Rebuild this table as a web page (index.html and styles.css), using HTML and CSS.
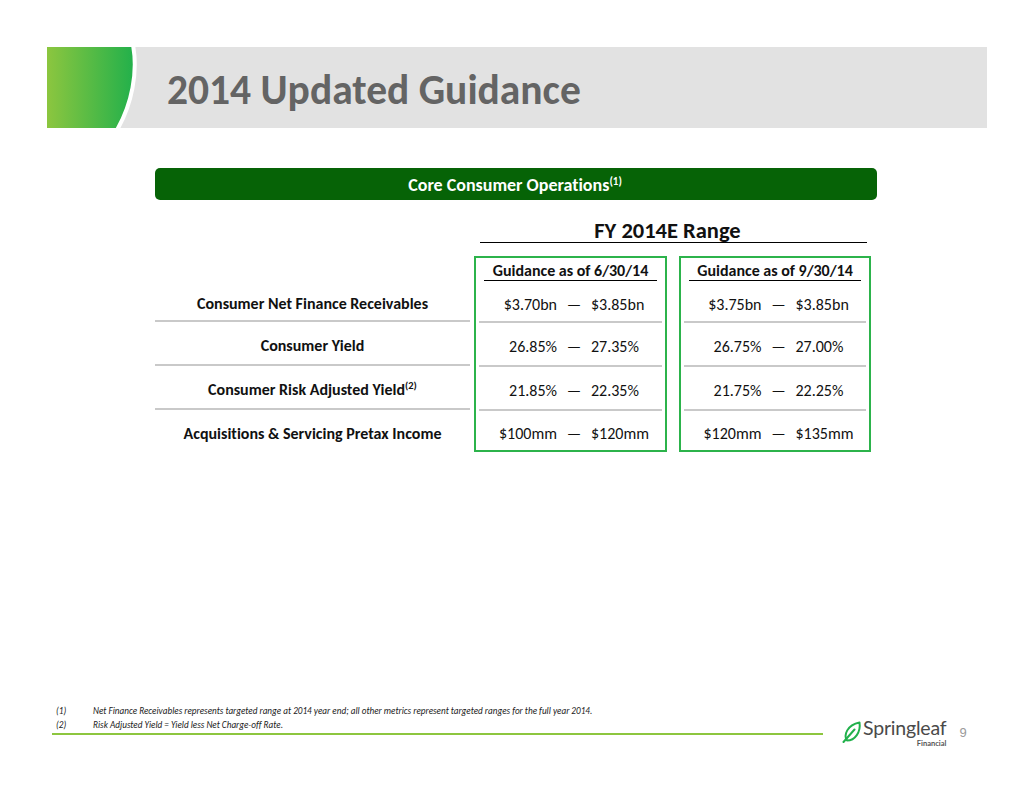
FILE: index.html
```html
<!DOCTYPE html>
<html lang="en">
<head>
<meta charset="utf-8">
<title>2014 Updated Guidance</title>
<link rel="stylesheet" href="styles.css">
</head>
<body>
<div class="page">
  <header class="titlebar">
    <svg class="title-mark" width="90" height="81" viewBox="0 0 90 81" aria-hidden="true">
      <defs>
        <linearGradient id="g1" x1="0" y1="0" x2="1" y2="0">
          <stop offset="0" stop-color="#8cc63f"/>
          <stop offset="1" stop-color="#21b04b"/>
        </linearGradient>
      </defs>
      <path d="M0 0 H86 C91 25 85 57 70 81 H0 Z" fill="url(#g1)"/>
      <path d="M86 -2 C91 25 85 57 70 83" fill="none" stroke="#ffffff" stroke-width="4"/>
    </svg>
    <h1 class="title">2014 Updated Guidance</h1>
  </header>

  <div class="section-bar"><span>Core Consumer Operations<sup>(1)</sup></span></div>

  <div class="guidance">
    <div class="range-head">FY 2014E Range</div>
    <div class="grid-body">
      <div class="labels">
        <div class="row r1"><span>Consumer Net Finance Receivables</span></div>
        <div class="row r2 sep"><span>Consumer Yield</span></div>
        <div class="row r3 sep"><span>Consumer Risk Adjusted Yield<sup>(2)</sup></span></div>
        <div class="row r4 sep"><span>Acquisitions &amp; Servicing Pretax Income</span></div>
      </div>
      <div class="box">
        <div class="box-head">Guidance as of 6/30/14</div>
        <div class="row r1 val"><span class="lo">$3.70bn</span><span class="dash">—</span><span class="hi">$3.85bn</span></div>
        <div class="row r2 val sep"><span class="lo">26.85%</span><span class="dash">—</span><span class="hi">27.35%</span></div>
        <div class="row r3 val sep"><span class="lo">21.85%</span><span class="dash">—</span><span class="hi">22.35%</span></div>
        <div class="row r4 val sep"><span class="lo">$100mm</span><span class="dash">—</span><span class="hi">$120mm</span></div>
      </div>
      <div class="box box2">
        <div class="box-head">Guidance as of 9/30/14</div>
        <div class="row r1 val"><span class="lo">$3.75bn</span><span class="dash">—</span><span class="hi">$3.85bn</span></div>
        <div class="row r2 val sep"><span class="lo">26.75%</span><span class="dash">—</span><span class="hi">27.00%</span></div>
        <div class="row r3 val sep"><span class="lo">21.75%</span><span class="dash">—</span><span class="hi">22.25%</span></div>
        <div class="row r4 val sep"><span class="lo">$120mm</span><span class="dash">—</span><span class="hi">$135mm</span></div>
      </div>
    </div>
  </div>

  <footer class="footer">
    <div class="foot-left">
      <div class="notes">
        <div class="note"><span class="note-num">(1)</span><span>Net Finance Receivables represents targeted range at 2014 year end; all other metrics represent targeted ranges for the full year 2014.</span></div>
        <div class="note"><span class="note-num">(2)</span><span>Risk Adjusted Yield = Yield less Net Charge-off Rate.</span></div>
      </div>
      <div class="rule"></div>
    </div>
    <div class="foot-right">
      <svg class="leaf" width="20" height="22" viewBox="0 0 20 22" aria-hidden="true">
        <path d="M5 19.5 C1.5 14 5 4 17.5 1.5 C19 11 13 19.5 5 19.5 Z" fill="none" stroke="#22b14c" stroke-width="2" stroke-linejoin="round"/>
        <path d="M1.5 21 L12.5 8.5" fill="none" stroke="#22b14c" stroke-width="2" stroke-linecap="round"/>
      </svg>
      <div class="wordmark">
        <span class="brand">Springleaf</span>
        <span class="brand-sub">Financial</span>
      </div>
      <span class="page-num">9</span>
    </div>
  </footer>
</div>
</body>
</html>
```

FILE: styles.css
```css
html, body {
  margin: 0;
  padding: 0;
}

body {
  width: 1034px;
  height: 799px;
  overflow: hidden;
  background: #ffffff;
  font-family: Carlito, "Liberation Sans Narrow", "Open Sans", sans-serif;
  font-variant-ligatures: no-common-ligatures;
  color: #111111;
}

.page {
  padding-top: 47px;
}

.titlebar {
  margin: 0 47px;
  height: 81px;
  background: #e2e2e2;
  display: flex;
  align-items: center;
}

.title-mark {
  flex: none;
  align-self: stretch;
}

.title {
  margin: 0 0 0 30px;
  font-size: 41.5px;
  font-weight: 700;
  line-height: 1;
  color: #646464;
  padding-top: 5px;
}

.section-bar {
  margin: 40px 157px 0 155px;
  height: 32px;
  background: #066306;
  border-radius: 5px;
  color: #ffffff;
  font-weight: 700;
  font-size: 18px;
  display: flex;
  align-items: center;
  justify-content: center;
  padding-right: 2px;
  padding-top: 1px;
  box-sizing: border-box;
}

sup {
  font-size: 11px;
  line-height: 0;
  vertical-align: 6px;
}

.labels sup {
  font-size: 10.5px;
  vertical-align: 6px;
}

.guidance {
  margin-left: 155px;
}

.range-head {
  margin: 18px 0 0 325px;
  width: 387px;
  box-sizing: border-box;
  padding-right: 12px;
  height: 25px;
  line-height: 26px;
  text-align: center;
  font-weight: 700;
  font-size: 22.5px;
  border-bottom: 1px solid #000000;
}

.grid-body {
  display: flex;
  align-items: flex-start;
  margin-top: 13px;
}

.labels {
  width: 315px;
  margin-right: 4px;
  padding-top: 25px;
  font-weight: 700;
  font-size: 16px;
}

.row {
  display: flex;
  align-items: center;
  justify-content: center;
  padding-top: 5px;
  box-sizing: border-box;
  font-size: 16px;
  white-space: nowrap;
}

.r1 { height: 39px; }
.r2 { height: 44px; }
.r3 { height: 44px; }
.r4 { height: 43px; }

.sep {
  border-top: 2px solid #c9c9c9;
}

.box {
  width: 193px;
  box-sizing: border-box;
  border: 2px solid #2cb34b;
}

.box2 {
  width: 192px;
  margin-left: 12px;
}

.box-head {
  margin: 0 8px;
  height: 22px;
  line-height: 25px;
  text-align: center;
  font-weight: 700;
  font-size: 16px;
  border-bottom: 1px solid #000000;
  white-space: nowrap;
}

.box .row {
  margin: 0 3px;
}

.box .r1 {
  margin-top: 1px;
}

.val {
  display: grid;
  grid-template-columns: 1fr auto 1fr;
  column-gap: 9px;
  padding-left: 7px;
  align-items: center;
}

.box .r4 {
  height: 41px;
}

.lo {
  text-align: right;
}

.hi {
  text-align: left;
}

.dash {
  width: 16px;
  text-align: center;
}

.footer {
  display: flex;
  align-items: flex-start;
  margin: 252px 0 0 52px;
}

.foot-left {
  width: 771px;
}

.notes {
  padding-left: 4px;
  font-style: italic;
  font-size: 9.2px;
  line-height: 14px;
  color: #222222;
}

.note {
  display: flex;
  white-space: nowrap;
}

.note-num {
  width: 37px;
  flex: none;
}

.rule {
  margin-top: 1px;
  height: 2px;
  background: #8dc63f;
}

.foot-right {
  margin: 13px 0 0 19px;
  display: flex;
  align-items: flex-start;
}

.leaf {
  flex: none;
  margin-top: 4px;
}

.wordmark {
  display: flex;
  flex-direction: column;
  align-items: flex-end;
  margin-left: 1px;
}

.brand {
  font-family: Lato, "Noto Sans", sans-serif;
  font-size: 19.5px;
  line-height: 22px;
  color: #4a4a4a;
  letter-spacing: -0.2px;
}

.brand-sub {
  font-family: Lato, "Noto Sans", sans-serif;
  font-weight: 700;
  font-size: 7.5px;
  line-height: 9px;
  color: #555555;
}

.page-num {
  margin: 8px 0 0 13px;
  font-family: "Liberation Sans", Arial, sans-serif;
  font-size: 13px;
  line-height: 16px;
  color: #9a9a9a;
}
```
